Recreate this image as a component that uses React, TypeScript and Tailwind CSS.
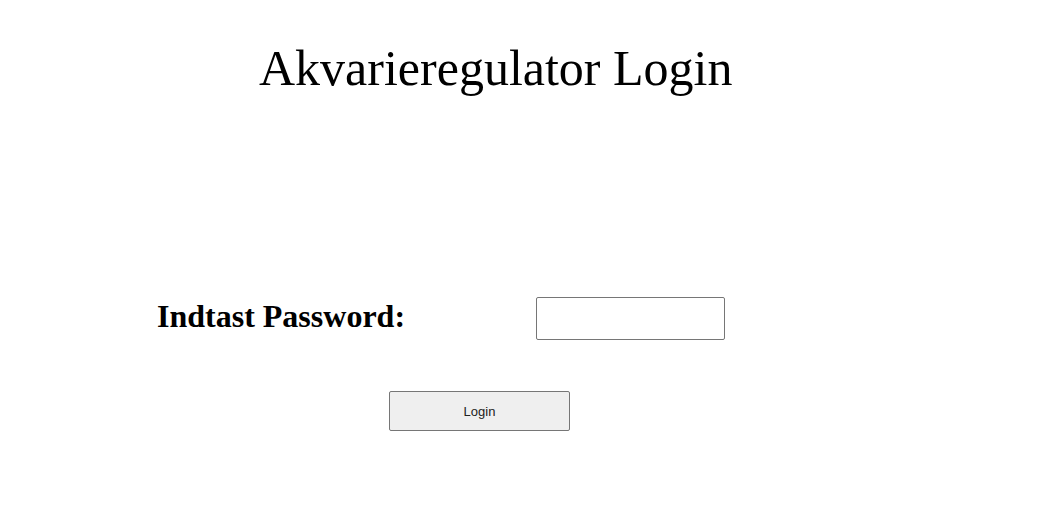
export default function App() {
  return (
    <div className="w-[1042px] h-[524px] bg-white text-black" style={{ fontFamily: '"Liberation Serif", serif' }}>
      <div className="pt-[38px] pl-[259px]">
        <h1 className="text-[50px] leading-[60px] font-normal">Akvarieregulator Login</h1>
      </div>
      <div className="mt-[199px] flex items-start pl-[157px]">
        <label className="text-[32px] font-bold leading-[40px] w-[379px] mt-[-1px]">Indtast Password:</label>
        <input type="password" className="w-[189px] h-[43px] border border-[#767676] rounded-[2px] bg-white" />
      </div>
      <div className="mt-[51px] pl-[389px]">
        <button
          className="w-[181px] h-[40px] border border-[#767676] rounded-[2px] bg-[#efefef] text-[13px] text-[#222] pt-[1px]"
          style={{ fontFamily: '"Liberation Sans", Arial, sans-serif' }}
        >
          Login
        </button>
      </div>
    </div>
  );
}
